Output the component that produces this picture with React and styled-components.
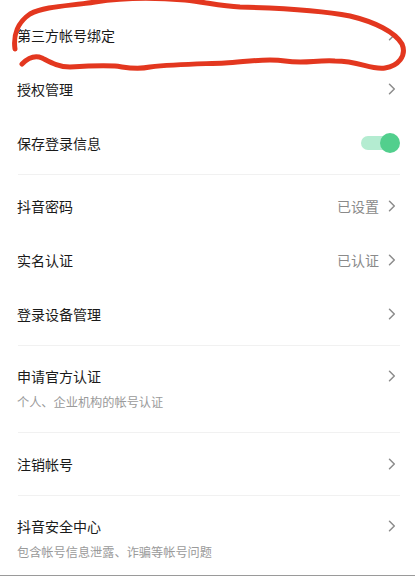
import React from "react";
import styled, { createGlobalStyle } from "styled-components";

const GlobalStyle = createGlobalStyle`
  html, body {
    margin: 0;
    padding: 0;
    background: #ffffff;
    font-family: "Noto Sans CJK SC", "Noto Sans", sans-serif;
  }
`;

const Page = styled.div`
  position: relative;
  width: 415px;
  height: 576px;
  overflow: hidden;
  padding-top: 4px;
  box-sizing: border-box;
  background: #fff;
`;

const Section = styled.div`
  padding: 4px 0;
`;

const Divider = styled.div`
  height: 1px;
  margin: 0 15px 0 18px;
  background: #f1f1f1;
`;

const BottomLine = styled.div`
  position: absolute;
  left: 0;
  right: 0;
  bottom: 0;
  height: 1px;
  background: #9a9a9a;
`;

const Row = styled.div`
  display: flex;
  align-items: ${(p) => (p.$sub ? "flex-start" : "center")};
  height: ${(p) => (p.$sub ? "auto" : "54px")};
  padding: ${(p) => (p.$sub ? "16px 19px 18px 17px" : "0 19px 0 17px")};
`;

const Texts = styled.div`
  flex: 1;
  display: flex;
  flex-direction: column;
  gap: 8px;
`;

const Title = styled.div`
  font-size: 14px;
  line-height: 20px;
  color: #1a1a1a;
`;

const Sub = styled.div`
  font-size: 12.2px;
  line-height: 16px;
  color: #9a9a9a;
`;

const Right = styled.div`
  display: flex;
  align-items: center;
  height: 20px;
  gap: 9px;
  font-size: 14px;
  color: #8a8a8a;
`;

const Toggle = styled.div`
  position: relative;
  width: 39px;
  height: 20px;
  margin-right: -4px;

  &::before {
    content: "";
    position: absolute;
    left: 0;
    top: 3px;
    width: 32px;
    height: 14px;
    border-radius: 7px;
    background: #b4ecd1;
  }

  &::after {
    content: "";
    position: absolute;
    right: 0;
    top: 0;
    width: 20px;
    height: 20px;
    border-radius: 50%;
    background: #52cf8d;
  }
`;

const Scribble = styled.svg`
  position: absolute;
  left: 0;
  top: 0;
  pointer-events: none;
`;

const Chevron = () => (
  <svg width="8" height="12" viewBox="0 0 8 12">
    <path
      d="M1.5 1.2 L6.3 6 L1.5 10.8"
      fill="none"
      stroke="#8c8c8c"
      strokeWidth="1.5"
      strokeLinecap="round"
      strokeLinejoin="round"
    />
  </svg>
);

const Item = ({ title, sub, value, toggle }) => (
  <Row $sub={!!sub}>
    <Texts>
      <Title>{title}</Title>
      {sub && <Sub>{sub}</Sub>}
    </Texts>
    <Right>
      {value && <span>{value}</span>}
      {toggle ? <Toggle /> : <Chevron />}
    </Right>
  </Row>
);

export default function App() {
  return (
    <Page>
      <GlobalStyle />
      <Section>
        <Item title="第三方帐号绑定" />
        <Item title="授权管理" />
        <Item title="保存登录信息" toggle />
      </Section>
      <Divider />
      <Section>
        <Item title="抖音密码" value="已设置" />
        <Item title="实名认证" value="已认证" />
        <Item title="登录设备管理" />
      </Section>
      <Divider />
      <Section>
        <Item title="申请官方认证" sub="个人、企业机构的帐号认证" />
      </Section>
      <Divider />
      <Section>
        <Item title="注销帐号" />
      </Section>
      <Divider />
      <Section>
        <Item title="抖音安全中心" sub="包含帐号信息泄露、诈骗等帐号问题" />
      </Section>
      <BottomLine />
      <Scribble width="415" height="576" viewBox="0 0 415 576">
        <path
          d="M15 49 C13 35 18 22 30 14 C45 6 70 6 95 2 C120 -2 150 -3 185 0 C205 2 220 6 240 7 C280 8 320 10 350 16 C375 22 395 32 402 44 C407 56 398 66 385 68 C370 70 360 61 335 61 C315 60 305 64 285 61 C265 58 245 62 225 63 C200 64 175 64 150 67 C135 70 125 67 115 66 C100 65 85 66 70 67 C58 67 50 62 42 58 C35 55 28 58 22 64"
          fill="none"
          stroke="#e3371f"
          strokeWidth="5"
          strokeLinecap="round"
          strokeLinejoin="round"
        />
      </Scribble>
    </Page>
  );
}
